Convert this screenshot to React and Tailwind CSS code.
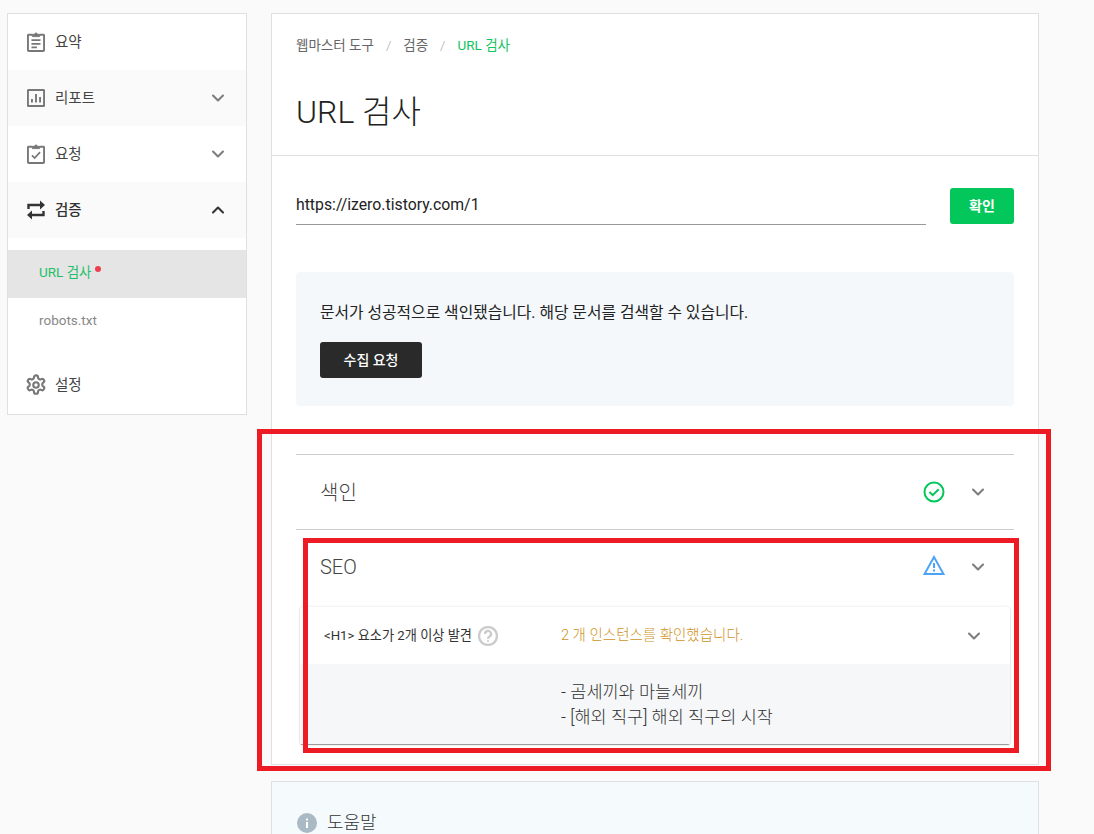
import React from "react";
import { ChevronDown, ChevronUp } from "lucide-react";

const Chev = ({ up, dark, className = "" }) => {
  const I = up ? ChevronUp : ChevronDown;
  return <I size={20} strokeWidth={2.5} className={(dark ? "text-[#333] " : "text-[#7d7d7d] ") + className} />;
};

const IconSummary = () => (
  <svg width="18" height="20" viewBox="0 0 20 22" fill="none" stroke="#777" strokeWidth="2.2">
    <path d="M6 3H2a1 1 0 0 0-1 1v16a1 1 0 0 0 1 1h16a1 1 0 0 0 1-1V4a1 1 0 0 0-1-1h-4" />
    <path d="M6 5V2.5h2.5a1.5 1.5 0 0 1 3 0H14V5z" fill="#777" strokeWidth="1" />
    <path d="M5 9h10M5 13h10M5 17h6" strokeWidth="1.9" />
  </svg>
);
const IconReport = () => (
  <svg width="18" height="18" viewBox="0 0 20 20" fill="none" stroke="#777" strokeWidth="2.2">
    <rect x="1" y="1" width="18" height="18" rx="1" />
    <path d="M5.5 15v-4M10 15V5.5M14.5 15V9" strokeWidth="2.1" />
  </svg>
);
const IconRequest = () => (
  <svg width="18" height="20" viewBox="0 0 20 22" fill="none" stroke="#777" strokeWidth="2.2">
    <path d="M6 3H2a1 1 0 0 0-1 1v16a1 1 0 0 0 1 1h16a1 1 0 0 0 1-1V4a1 1 0 0 0-1-1h-4" />
    <path d="M6 5V2.5h2.5a1.5 1.5 0 0 1 3 0H14V5z" fill="#777" strokeWidth="1" />
    <path d="M5.5 12.5l3 3 6-6.5" strokeWidth="1.9" />
  </svg>
);
const IconVerify = () => (
  <svg width="18" height="20" viewBox="0 0 18 20" fill="none" stroke="#333" strokeWidth="2.4">
    <path d="M1.5 9V5H15" />
    <path d="M13 0.5v9L18 5z" fill="#333" stroke="none" />
    <path d="M16.5 11v4H3" />
    <path d="M5 10.5v9L0 15z" fill="#333" stroke="none" />
  </svg>
);
const IconGear = () => (
  <svg className="-ml-[2px]" width="22" height="22" viewBox="0 0 24 24" fill="none" stroke="#777" strokeWidth="2.3" strokeLinejoin="round">
    <path d="M12.2 1.5h-.4a2 2 0 0 0-2 2v.2a2 2 0 0 1-1 1.7l-.4.3a2 2 0 0 1-2 0l-.2-.1a2 2 0 0 0-2.7.7l-.2.4a2 2 0 0 0 .7 2.7l.2.1a2 2 0 0 1 1 1.7v.5a2 2 0 0 1-1 1.8l-.2.1a2 2 0 0 0-.7 2.7l.2.4a2 2 0 0 0 2.7.7l.2-.1a2 2 0 0 1 2 0l.4.3a2 2 0 0 1 1 1.7v.2a2 2 0 0 0 2 2h.4a2 2 0 0 0 2-2v-.2a2 2 0 0 1 1-1.7l.4-.3a2 2 0 0 1 2 0l.2.1a2 2 0 0 0 2.7-.7l.2-.4a2 2 0 0 0-.7-2.7l-.2-.1a2 2 0 0 1-1-1.8v-.5a2 2 0 0 1 1-1.7l.2-.1a2 2 0 0 0 .7-2.7l-.2-.4a2 2 0 0 0-2.7-.7l-.2.1a2 2 0 0 1-2 0l-.4-.3a2 2 0 0 1-1-1.7v-.2a2 2 0 0 0-2-2z" />
    <circle cx="12" cy="12" r="3" />
  </svg>
);

const NavItem = ({ icon, label, chev, up, bold, tinted }) => (
  <div className={"h-14 flex items-center pl-[19px] pr-[18px] " + (tinted ? "bg-[#fafafa]" : "bg-white")}>
    <span className="w-5 flex justify-start">{icon}</span>
    <span className={"ml-[8px] mt-[1px] text-[14.5px] " + (bold ? "font-medium text-[#333]" : "font-normal text-[#444]")}>{label}</span>
    {chev && <Chev up={up} dark={bold} className="ml-auto" />}
  </div>
);

const Divider = () => <div className="h-px bg-[#ccc]" />;

export default function App() {
  return (
    <div
      className="relative h-[834px] w-[1094px] overflow-hidden bg-[#fafafa] flex items-start gap-6 pl-[7px] pt-[13px] font-light"
      style={{ fontFamily: 'Roboto, "Noto Sans CJK KR", sans-serif' }}
    >
      <aside className="w-[240px] h-[402px] shrink-0 border border-[#e0e0e0] bg-white font-normal">
        <NavItem icon={<IconSummary />} label="요약" />
        <NavItem icon={<IconReport />} label="리포트" chev tinted />
        <NavItem icon={<IconRequest />} label="요청" chev />
        <NavItem icon={<IconVerify />} label="검증" chev up bold tinted />
        <div className="mt-3 h-12 bg-[#e5e5e5] flex items-center pl-[31px] pb-[3px] text-[13.5px] text-[#1fbf68]">
          URL 검사
          <span className="ml-[3px] mb-[8px] w-[6px] h-[6px] rounded-full bg-[#ee3f50]" />
        </div>
        <div className="h-12 flex items-center pl-[31px] pb-[3px] text-[13.5px] text-[#888]">robots.txt</div>
        <div className="mt-[11px]">
          <NavItem icon={<IconGear />} label="설정" />
        </div>
      </aside>

      <div className="w-[768px] shrink-0 flex flex-col gap-4">
        <main className="h-[752px] border border-[#e0e0e0] bg-white">
          <div className="h-[142px] border-b border-[#e0e0e0] px-6 pt-[19px]">
            <div className="flex items-center h-6 text-[13.5px] font-normal text-[#666]">
              <span>웹마스터 도구</span>
              <span className="mx-[12px] font-light text-[#aaa]">/</span>
              <span>검증</span>
              <span className="mx-[12px] font-light text-[#aaa]">/</span>
              <span className="text-[#12c45f]">URL 검사</span>
            </div>
            <h1 className="mt-[31px] text-[32px] leading-[48px] font-light text-[#222]">URL 검사</h1>
          </div>
          <div className="px-6">
            <div className="mt-8 flex items-start justify-between">
              <div className="w-[630px] h-[37px] border-b border-[#999] text-[15.8px] leading-[34px] text-[#222] font-normal">
                https://izero.tistory.com/1
              </div>
              <button className="w-16 h-9 rounded-[3px] bg-[#03c75a] text-white text-[14px] font-bold">확인</button>
            </div>
            <div className="mt-[47px] h-[134px] rounded-[4px] bg-[#f4f8fb] px-6 pt-[28px]">
              <p className="h-[26px] text-[15.8px] leading-[26px] text-[#222] font-normal">
                문서가 성공적으로 색인됐습니다. 해당 문서를 검색할 수 있습니다.
              </p>
              <button className="mt-[16px] w-[102px] h-9 rounded-[3px] bg-[#2a2a2a] text-white text-[14px] font-medium">
                수집 요청
              </button>
            </div>
            <div className="mt-[48px]">
              <Divider />
              <div className="h-[74px] flex items-center pl-6 pr-[26px]">
                <span className="mt-[2px] text-[20px] text-[#444]">색인</span>
                <svg className="ml-auto" width="22" height="22" viewBox="0 0 22 22" fill="none" stroke="#03c75a" strokeWidth="2">
                  <circle cx="11" cy="11" r="9.5" />
                  <path d="M6.5 11l3.2 3.2 6-6" />
                </svg>
                <Chev className="ml-[23px]" />
              </div>
              <Divider />
              <div className="h-[77px] flex items-start pt-[26px] pl-6 pr-[26px]">
                <span className="text-[20px] leading-[22px] text-[#444]">SEO</span>
                <svg className="ml-auto -mt-[1px]" width="22" height="20" viewBox="0 0 22 20" fill="none" stroke="#4da3f5" strokeWidth="2">
                  <path d="M11 2L1.5 19h19z" />
                  <path d="M11 8v5M11 14.5v2" strokeWidth="2" />
                </svg>
                <Chev className="ml-[23px] mt-[1px]" />
              </div>
              <section className="h-[137px] rounded-[2px] bg-white shadow-[0_1px_1px_rgba(0,0,0,0.4),0_0_3px_rgba(0,0,0,0.12)] ml-[4px] w-[710px]">
                <div className="h-[57px] flex items-center pl-6 pr-[26px]">
                  <div className="w-[237px] flex items-center">
                    <span className="text-[13.2px] text-[#333] font-normal">&lt;H1&gt; 요소가 2개 이상 발견</span>
                    <svg className="ml-[6px]" width="20" height="20" viewBox="0 0 20 20" fill="none" stroke="#ccc" strokeWidth="2.4">
                      <circle cx="10" cy="10" r="9" />
                      <path d="M7 8a3 3 0 1 1 4.5 2.5c-1 .6-1.5 1-1.5 2.2" />
                      <circle cx="10" cy="15" r="1" fill="#ccc" stroke="none" />
                    </svg>
                  </div>
                  <span className="text-[14.5px] text-[#cf9226]">2 개 인스턴스를 확인했습니다.</span>
                  <Chev className="ml-auto" />
                </div>
                <div className="h-[80px] bg-[#f6f7f9] pl-[261px] pt-[16px] text-[17.5px] leading-[25px] text-[#333]">
                  <div>- 곰세끼와 마늘세끼</div>
                  <div>- [해외 직구] 해외 직구의 시작</div>
                </div>
              </section>
            </div>
          </div>
        </main>
        <div className="h-[80px] border border-[#e0e0e0] bg-[#f5fafd] flex items-start pl-[25px] pt-[31px]">
          <svg width="20" height="20" viewBox="0 0 20 20">
            <circle cx="10" cy="10" r="10" fill="#a9bac5" />
            <rect x="9" y="9" width="2" height="6" fill="#fff" />
            <rect x="9" y="5.5" width="2" height="2" fill="#fff" />
          </svg>
          <span className="ml-[10px] text-[18px] leading-[20px] text-[#333]">도움말</span>
        </div>
      </div>

      <div className="absolute left-[257px] top-[429px] w-[794px] h-[342px] border-[5px] border-[#ed1c24]" />
      <div className="absolute left-[303px] top-[538px] w-[716px] h-[215px] border-[5px] border-[#ed1c24]" />
    </div>
  );
}
